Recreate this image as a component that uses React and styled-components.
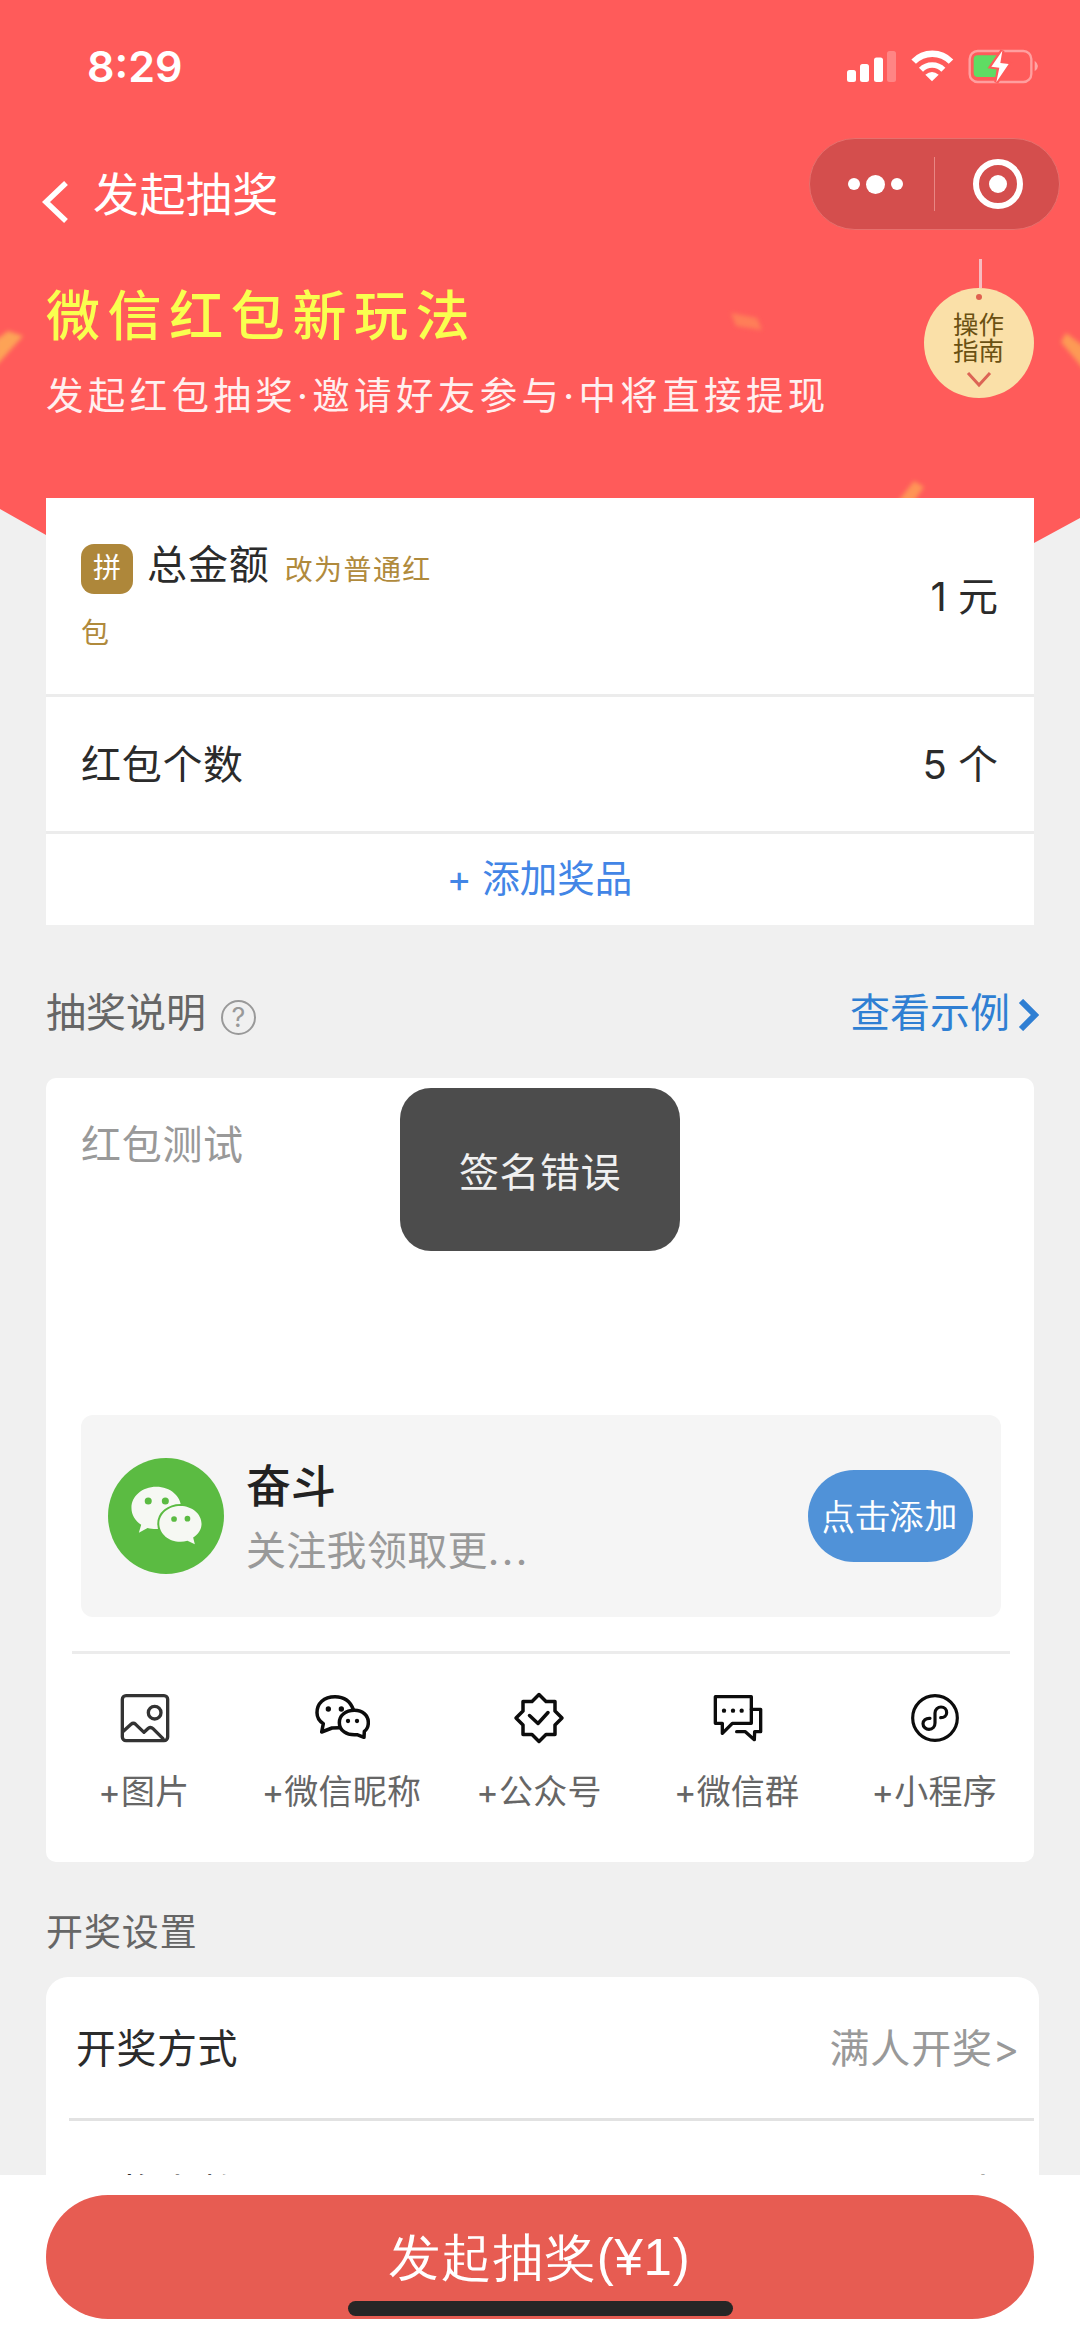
import React from "react";
import styled, { createGlobalStyle } from "styled-components";

const GlobalStyle = createGlobalStyle`
  * { box-sizing: border-box; }
  body {
    margin: 0;
    background: #f0f0f0;
    font-family: Inter, "Noto Sans CJK SC", sans-serif;
    color: #2b2b2b;
  }
`;

const Screen = styled.div`
  width: 1080px;
  height: 2339px;
  display: flex;
  flex-direction: column;
  overflow: hidden;
  position: relative;
  background: #f0f0f0;
`;

const Content = styled.main`
  height: 2175px;
  flex: none;
  overflow: hidden;
`;

const Text = styled.span`
  display: block;
  flex: none;
  padding-top: 2px;
  white-space: nowrap;
  font-size: ${(p) => p.$size || 40}px;
  line-height: ${(p) => p.$line || 40}px;
  font-weight: ${(p) => p.$weight || 400};
  letter-spacing: ${(p) => p.$spacing || 0}px;
  color: ${(p) => p.$color || "#2b2b2b"};
`;

/* ---------- header ---------- */

const Hero = styled.header`
  position: relative;
  height: 498px;
`;

const Backdrop = styled.svg`
  position: absolute;
  left: 0;
  top: 0;
  display: block;
`;

const HeroInner = styled.div`
  position: relative;
`;

const StatusBar = styled.div`
  height: 133px;
  padding: 0 38px 4px 87px;
  display: flex;
  align-items: center;
  justify-content: space-between;
`;

const StatusIcons = styled.svg`
  display: block;
  width: 200px;
  height: 40px;
  margin-top: 3px;
`;

const NavBar = styled.nav`
  height: 101px;
  padding: 0 20px 0 41px;
  display: flex;
  align-items: center;
`;

const BackIcon = styled.svg`
  display: block;
  margin: 36px 23px 0 0;
`;

const NavTitle = styled(Text)`
  padding-top: 20px;
  flex: 1;
`;

const Capsule = styled.div`
  width: 251px;
  height: 92px;
  border-radius: 46px;
  border: 1.5px solid #e7706d;
  background: #d44e4d;
  display: flex;
  align-items: center;
`;

const CapsuleHalf = styled.div`
  flex: 1;
  display: flex;
  justify-content: center;
  align-items: center;
  gap: 6px;
  padding: 1px 0 0 ${(p) => p.$shift || 0}px;
`;

const Dot = styled.i`
  width: ${(p) => p.$d}px;
  height: ${(p) => p.$d}px;
  border-radius: 50%;
  background: #fff;
`;

const CapsuleLine = styled.i`
  width: 1px;
  height: 54px;
  margin-left: -2px;
  background: #e88784;
`;

const Ring = styled.div`
  width: 50px;
  height: 50px;
  border: 6.5px solid #fff;
  border-radius: 50%;
  display: flex;
  align-items: center;
  justify-content: center;
`;

const Banner = styled.div`
  display: flex;
  justify-content: space-between;
  padding: 25px 46px 0 46px;
`;

const BannerText = styled.div`
  display: flex;
  flex-direction: column;
  gap: 27px;
  padding-top: 26px;
`;

const Guide = styled.div`
  display: flex;
  flex-direction: column;
  align-items: center;
  width: 110px;
`;

const GuideString = styled.i`
  width: 3px;
  height: 29px;
  margin-left: 2px;
  background: #f6bcc0;
`;

const GuideDisc = styled.div`
  width: 110px;
  height: 110px;
  border-radius: 50%;
  background: #fae0a8;
  display: flex;
  flex-direction: column;
  align-items: center;
`;

const GuideHole = styled.i`
  width: 6px;
  height: 6px;
  border-radius: 50%;
  background: #e0604f;
  margin: 6px 0 12px;
`;

const GuideText = styled(Text)`
  padding: 0;
  margin-right: 1px;
`;

const GuideArrow = styled.svg`
  display: block;
  margin-top: 6px;
`;

/* ---------- cards ---------- */

const PrizeCard = styled.section`
  position: relative;
  margin: 0 46px;
  height: 427px;
  background: #fff;
`;

const PrizeRow = styled.div`
  height: ${(p) => p.$h}px;
  padding: 0 36px 0 35px;
  display: flex;
  align-items: center;
  justify-content: ${(p) => (p.$center ? "center" : "space-between")};
  border-bottom: ${(p) => (p.$last ? 0 : 3)}px solid #ececec;
`;

const AmountLabel = styled.div`
  width: 367px;
  padding-top: 5px;
  font-size: 40px;
  line-height: 57px;
  letter-spacing: 0.9px;
`;

const PinBadge = styled.span`
  display: inline-block;
  width: 52px;
  height: 50px;
  margin-right: 14px;
  border-radius: 13px;
  background: #ae873a;
  color: #fff;
  font-size: 28px;
  line-height: 49px;
  letter-spacing: 0;
  text-align: center;
  vertical-align: 1px;
`;

const SwitchLink = styled.span`
  margin-left: 15px;
  font-size: 28px;
  letter-spacing: 1.4px;
  vertical-align: -1px;
  color: #b08a3c;
`;

const SectionHead = styled.div`
  height: ${(p) => p.$h}px;
  padding: ${(p) => p.$top}px 41px 0 46px;
  display: flex;
  align-items: center;
`;

const Help = styled.i`
  width: 35px;
  height: 35px;
  margin: 12px auto 0 15px;
  border: 2.5px solid #999;
  border-radius: 50%;
  color: #999;
  font-style: normal;
  font-size: 27px;
  line-height: 31px;
  text-align: center;
`;

const NextIcon = styled.svg`
  display: block;
  margin: 6px 0 0 7px;
`;

const DescCard = styled.section`
  margin: 0 46px;
  height: 784px;
  border-radius: 10px;
  background: #fff;
`;

const DescInput = styled.div`
  height: 337px;
  padding: 45px 35px 0;
`;

const Account = styled.div`
  height: 202px;
  margin: 0 33px 0 35px;
  padding: 0 28px 0 27px;
  border-radius: 12px;
  background: #f5f5f5;
  display: flex;
  align-items: center;
`;

const AccountText = styled.div`
  flex: 1;
  padding: 0 0 5px 22px;
  display: flex;
  flex-direction: column;
  gap: 14px;
`;

const Ellipsis = styled.span`
  letter-spacing: 2.4px;
`;

const AddButton = styled.button`
  width: 165px;
  height: 92px;
  padding: 0 1px 2px 0;
  border: 0;
  border-radius: 46px;
  background: #5092d8;
  display: flex;
  align-items: center;
  justify-content: center;
`;

const Divider = styled.hr`
  height: 3px;
  border: 0;
  margin: ${(p) => p.$margin};
  background: ${(p) => p.$color || "#ececec"};
`;

const Tools = styled.div`
  display: grid;
  grid-template-columns: repeat(5, 1fr);
  padding-top: 36px;
`;

const Tool = styled.div`
  display: flex;
  flex-direction: column;
  align-items: center;
  gap: 24px;
`;

const ToolLabel = styled(Text)`
  margin-right: 2px;
`;

const Line = styled.svg`
  display: block;
  fill: none;
  stroke: ${(p) => p.$color || "#0c0c0c"};
  stroke-linejoin: round;
  stroke-linecap: round;
`;

const SettingCard = styled.section`
  margin: 0 41px 0 46px;
  height: 400px;
  border-radius: 22px;
  background: #fff;
`;

const SettingRow = styled.div`
  height: ${(p) => p.$h}px;
  padding: ${(p) => p.$top || 0}px ${(p) => p.$right}px 0 30px;
  display: flex;
  align-items: center;
  justify-content: space-between;
`;

/* ---------- overlays and footer ---------- */

const Toast = styled.div`
  position: absolute;
  left: 400px;
  top: 1088px;
  width: 280px;
  height: 163px;
  padding-top: 5px;
  border-radius: 31px;
  background: #4c4c4c;
  display: flex;
  align-items: center;
  justify-content: center;
`;

const Footer = styled.footer`
  flex: 1;
  padding: 20px 46px 0;
  background: #fff;
`;

const Submit = styled.button`
  width: 988px;
  height: 124px;
  padding: 0;
  border: 0;
  border-radius: 62px;
  background: #e75c52;
  display: flex;
  align-items: center;
  justify-content: center;
`;

const HomeIndicator = styled.i`
  position: absolute;
  left: 348px;
  top: 2301px;
  width: 385px;
  height: 15px;
  border-radius: 8px;
  background: #262626;
`;

const HeroBackdrop = () => (
  <Backdrop width="1080" height="560" viewBox="0 0 1080 560">
    <defs>
      <filter id="soft" x="-20%" y="-20%" width="140%" height="140%">
        <feGaussianBlur stdDeviation="2" />
      </filter>
    </defs>
    <path d="M0 0H1080V518L1034 543H46V535L0 509Z" fill="#ff5b5a" />
    <g filter="url(#soft)">
      <path d="M-4 340L8 331L23 336L-4 366Z" fill="#fda357" />
      <path d="M731 313L757 318L762 330L736 326Z" fill="#ff7e58" />
      <path d="M1061 342L1066 333L1086 348V372Z" fill="#fd9a54" />
      <path d="M914 481L924 487L912 504H896Z" fill="#ff9456" />
    </g>
  </Backdrop>
);

const SignalIcons = () => (
  <StatusIcons viewBox="842 46 200 40">
    <g fill="#fff">
      <rect x="847" y="70" width="9" height="12" rx="2.5" />
      <rect x="860" y="64" width="9" height="18" rx="2.5" />
      <rect x="874" y="57.500" width="9" height="24.500" rx="2.500" />
      <rect x="887" y="51" width="9" height="31" rx="2.5" opacity=".26" />
    </g>
    <g transform="translate(830 30) scale(.33333)">
      <path d="M251 95A78 78 0 0 1 363 95" fill="none" stroke="#fff" strokeWidth="19" />
      <path d="M273 119A47 47 0 0 1 340 119" fill="none" stroke="#fff" strokeWidth="17" />
      <path d="M306 154L286 134Q306 118 326 134Z" fill="#fff" />
      <rect x="419" y="63" width="185" height="93" rx="24" fill="none" stroke="#fff" strokeOpacity=".42" strokeWidth="7" />
      <path d="M614 92Q634 108 614 124Z" fill="#fff" opacity=".45" />
      <path d="M443 76H500V141H443Q431 141 431 129V88Q431 76 443 76Z" fill="#5fdc63" />
      <path d="M517 62L484 110L508 113L499 157L536 102L511 99Z" fill="#fff" stroke="#ff5b5a" strokeWidth="13" paintOrder="stroke" />
    </g>
  </StatusIcons>
);

const WechatAvatar = () => (
  <svg width="116" height="116" viewBox="54 55 346 346">
    <circle cx="227" cy="228" r="173" fill="#5bbb42" />
    <path d="M198 141C240 141 272 169 272 204S240 267 198 267C188 267 180 266 172 264L146 278L153 254C135 242 124 224 124 204C124 169 156 141 198 141Z" fill="#f6f8f3" />
    <path d="M270 198C305 198 333 222 333 251C333 268 324 282 308 292L313 312L291 302C284 304 277 305 270 305C235 305 207 281 207 251S235 198 270 198Z" fill="#f6f8f3" stroke="#5bbb42" strokeWidth="12" paintOrder="stroke" />
    <g fill="#5bbb42">
      <circle cx="174" cy="183" r="10.500" />
      <circle cx="225" cy="183" r="10.500" />
      <circle cx="251" cy="237" r="8.500" />
      <circle cx="291" cy="236" r="8.500" />
    </g>
  </svg>
);

const ImageIcon = () => (
  <Line width="56" height="56" viewBox="51 29 168 168" strokeWidth="10" $color="#333">
    <rect x="67" y="46" width="136" height="135" rx="11" />
    <circle cx="164" cy="97" r="19" />
    <path d="M70 153L93 132Q100 126 107 132L132 156L145 144Q152 138 159 145L189 175" />
  </Line>
);

const WechatIcon = () => (
  <Line width="56" height="56" viewBox="643 29 168 168" strokeWidth="10.500">
    <path d="M761 88C752 62 732 49 706 49C672 49 652 70 652 97C652 112 659 122 671 130L666 155L697 143L719 142" />
    <path d="M764 90C790 90 806 106 806 127C806 139 802 147 794 153L793 171L772 163C740 166 719 150 719 127C719 105 738 90 764 90Z" />
    <g fill="#0c0c0c" stroke="none">
      <circle cx="686" cy="86" r="8" />
      <circle cx="725" cy="86" r="8" />
      <circle cx="745" cy="122" r="6.500" />
      <circle cx="772" cy="122" r="6.500" />
    </g>
  </Line>
);

const VerifiedIcon = () => (
  <Line width="56" height="56" viewBox="-27 -28 56 56" strokeWidth="3.5">
    <path d="M0 -23.500L7 -16.500H16V-7L23 0L16 7V16.500H7L0 23.500L-7 16.500H-16V7L-23 0L-16 -7V-16.500H-7Z" />
    <path d="M-9.500 -2.500L-1 5.500L9 -5.500" />
  </Line>
);

const ChatIcon = () => (
  <Line width="56" height="56" viewBox="208 29 168 168" strokeWidth="10">
    <path d="M224 49H332V129H275L245 159V129H224Z" />
    <path d="M332 87H360V154H342L341 178L314 154H288" />
    <g fill="#0c0c0c" stroke="none">
      <circle cx="250" cy="91" r="6.500" />
      <circle cx="277" cy="91" r="6.500" />
      <circle cx="303" cy="91" r="6.500" />
    </g>
  </Line>
);

const MiniProgramIcon = () => (
  <Line width="56" height="56" viewBox="802 29 168 168" strokeWidth="9.500">
    <circle cx="886" cy="113" r="67" />
    <path d="M871 114C858 113 850 121 850 130C850 140 859 147 868 147C879 147 886 139 886 128V98C886 87 895 80 904 80C914 80 921 88 921 97C921 106 914 112 903 112" />
  </Line>
);

const tools = [
  { label: "+图片", Icon: ImageIcon },
  { label: "+微信昵称", Icon: WechatIcon },
  { label: "+公众号", Icon: VerifiedIcon },
  { label: "+微信群", Icon: ChatIcon },
  { label: "+小程序", Icon: MiniProgramIcon },
];

export default function App() {
  return (
    <Screen>
      <GlobalStyle />
      <Content>
        <Hero>
          <HeroBackdrop />
          <HeroInner>
            <StatusBar>
              <Text $size={43} $weight={600} $color="#fff">8:29</Text>
              <SignalIcons />
            </StatusBar>
            <NavBar>
              <BackIcon width="29" height="42" viewBox="0 0 29 42">
                <path d="M25 2L5 21L25 40" fill="none" stroke="#fff" strokeWidth="5.500" />
              </BackIcon>
              <NavTitle $size={46} $color="#fff" $spacing={0.4}>发起抽奖</NavTitle>
              <Capsule>
                <CapsuleHalf $shift={4}>
                  <Dot $d={12} />
                  <Dot $d={19} />
                  <Dot $d={12} />
                </CapsuleHalf>
                <CapsuleLine />
                <CapsuleHalf $shift={2}>
                  <Ring>
                    <Dot $d={18} />
                  </Ring>
                </CapsuleHalf>
              </Capsule>
            </NavBar>
            <Banner>
              <BannerText>
                <Text $size={54} $line={60} $weight={500} $spacing={7.6} $color="#f9ff4f">微信红包新玩法</Text>
                <Text $size={37.5} $spacing={4.35} $color="#fff0f0">发起红包抽奖·邀请好友参与·中将直接提现</Text>
              </BannerText>
              <Guide>
                <GuideString />
                <GuideDisc>
                  <GuideHole />
                  <GuideText $size={25.5} $line={26} $color="#6a5012">操作</GuideText>
                  <GuideText $size={25.5} $line={26} $color="#6a5012">指南</GuideText>
                  <GuideArrow width="26" height="18" viewBox="0 0 26 18">
                    <path d="M2 3L13 15L24 3" fill="none" stroke="#dc6455" strokeWidth="3" />
                  </GuideArrow>
                </GuideDisc>
              </Guide>
            </Banner>
          </HeroInner>
        </Hero>

        <PrizeCard>
          <PrizeRow $h={199}>
            <AmountLabel>
              <PinBadge>拼</PinBadge>总金额<SwitchLink>改为普通红包</SwitchLink>
            </AmountLabel>
            <Text>1 元</Text>
          </PrizeRow>
          <PrizeRow $h={137}>
            <Text $spacing={0.7}>红包个数</Text>
            <Text>5 个</Text>
          </PrizeRow>
          <PrizeRow $h={88} $center $last>
            <Text $size={37.5} $line={36} $color="#4285e6">+ 添加奖品</Text>
          </PrizeRow>
        </PrizeCard>

        <SectionHead $h={153} $top={20}>
          <Text $color="#666">抽奖说明</Text>
          <Help>?</Help>
          <Text $color="#2f7fd3">查看示例</Text>
          <NextIcon width="22" height="32" viewBox="0 0 22 32">
            <path d="M4 2L18 16L4 30" fill="none" stroke="#2f7fd3" strokeWidth="6" />
          </NextIcon>
        </SectionHead>

        <DescCard>
          <DescInput>
            <Text $spacing={0.7} $color="#999">红包测试</Text>
          </DescInput>
          <Account>
            <WechatAvatar />
            <AccountText>
              <Text $size={45} $line={56} $weight={500} $color="#222">奋斗</Text>
              <Text $color="#999" $spacing={0.3}>关注我领取更<Ellipsis>...</Ellipsis></Text>
            </AccountText>
            <AddButton>
              <Text $size={34} $weight={500} $color="#fff" $spacing={0.3}>点击添加</Text>
            </AddButton>
          </Account>
          <Divider $margin="34px 24px 0 26px" />
          <Tools>
            {tools.map(({ label, Icon }) => (
              <Tool key={label}>
                <Icon />
                <ToolLabel $size={34} $spacing={0.2} $color="#666">{label}</ToolLabel>
              </Tool>
            ))}
          </Tools>
        </DescCard>

        <SectionHead $h={115} $top={25}>
          <Text $size={37} $spacing={0.9} $color="#666">开奖设置</Text>
        </SectionHead>

        <SettingCard>
          <SettingRow $h={141} $right={19}>
            <Text $spacing={0.5}>开奖方式</Text>
            <Text $spacing={0.8} $color="#999">满人开奖&gt;</Text>
          </SettingRow>
          <Divider $margin="0 5px 0 23px" $color="#e2e2e2" />
          <SettingRow $h={136} $top={8} $right={36}>
            <Text $spacing={0.7}>开奖人数</Text>
            <Text $color="#666">5 人</Text>
          </SettingRow>
        </SettingCard>
      </Content>

      <Footer>
        <Submit>
          <Text $size={51} $line={60} $color="#fff" $spacing={0.8}>发起抽奖(¥1)</Text>
        </Submit>
      </Footer>

      <HomeIndicator />
      <Toast>
        <Text $spacing={0.5} $color="#f0f0f0">签名错误</Text>
      </Toast>
    </Screen>
  );
}
